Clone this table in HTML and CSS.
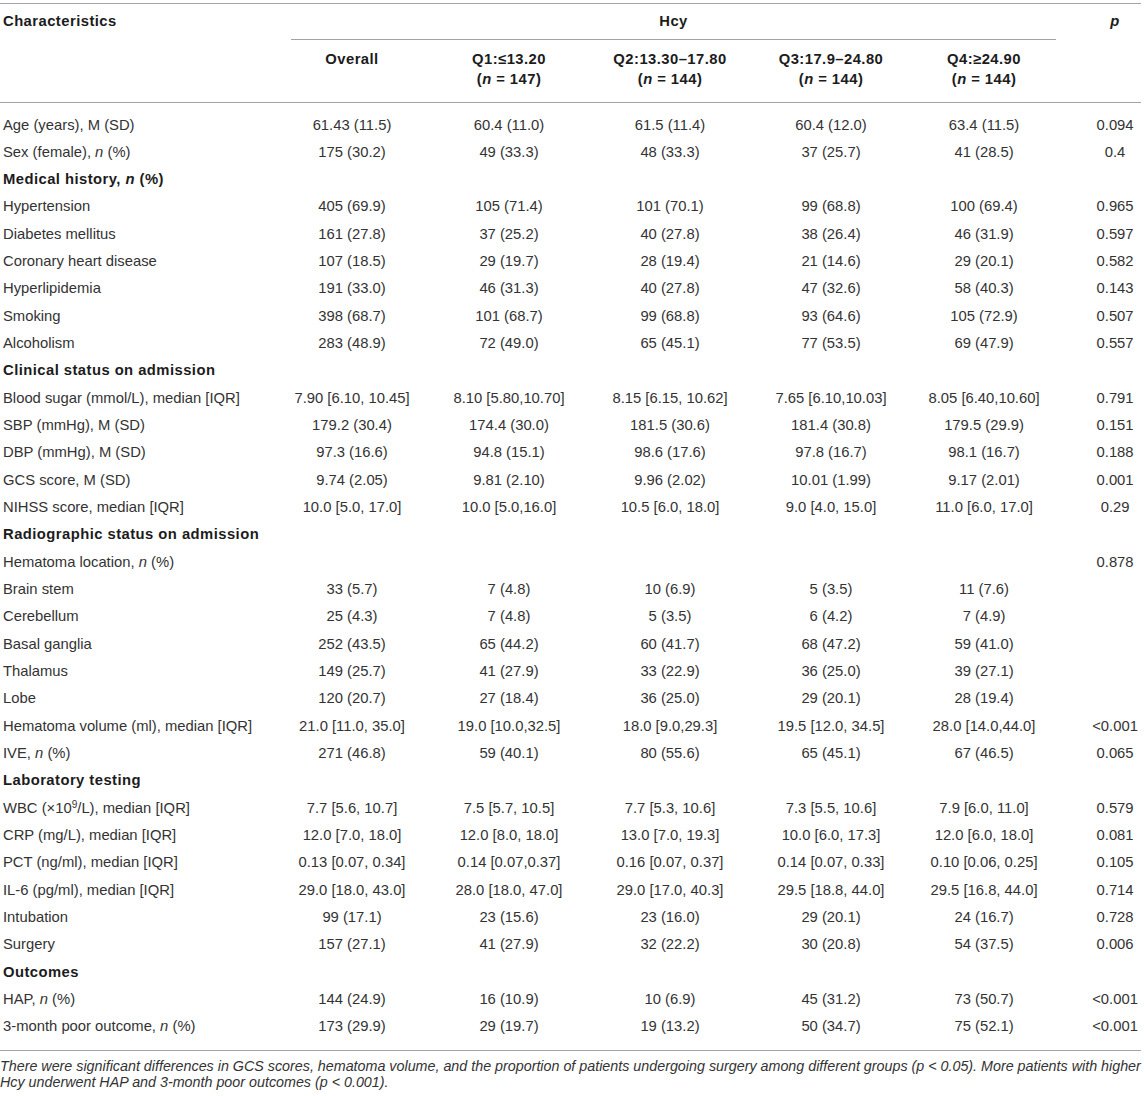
FILE: index.html
```html
<!DOCTYPE html>
<html lang="en">
<head>
<meta charset="utf-8">
<title>Table</title>
<link rel="stylesheet" href="styles.css">
</head>
<body>
<div class="page">
<table class="data">
  <colgroup>
    <col class="c-char">
    <col class="c-all">
    <col class="c-q1">
    <col class="c-q2">
    <col class="c-q3">
    <col class="c-q4">
    <col class="c-p">
  </colgroup>
  <thead>
    <tr class="h1">
      <th rowspan="2" class="th-char">Characteristics</th>
      <th colspan="5" class="th-hcy"><div class="hcy-line">Hcy</div></th>
      <th rowspan="2" class="th-p"><i>p</i></th>
    </tr>
    <tr class="h2">
      <th>Overall</th>
      <th>Q1:≤13.20<br>(<i>n</i> = 147)</th>
      <th>Q2:13.30–17.80<br>(<i>n</i> = 144)</th>
      <th>Q3:17.9–24.80<br>(<i>n</i> = 144)</th>
      <th>Q4:≥24.90<br>(<i>n</i> = 144)</th>
    </tr>
  </thead>
  <tbody>
    <tr><td>Age (years), M (SD)</td><td>61.43 (11.5)</td><td>60.4 (11.0)</td><td>61.5 (11.4)</td><td>60.4 (12.0)</td><td>63.4 (11.5)</td><td>0.094</td></tr>
    <tr><td>Sex (female), <i>n</i> (%)</td><td>175 (30.2)</td><td>49 (33.3)</td><td>48 (33.3)</td><td>37 (25.7)</td><td>41 (28.5)</td><td>0.4</td></tr>
    <tr class="sec"><td colspan="7">Medical history, <i>n</i> (%)</td></tr>
    <tr><td>Hypertension</td><td>405 (69.9)</td><td>105 (71.4)</td><td>101 (70.1)</td><td>99 (68.8)</td><td>100 (69.4)</td><td>0.965</td></tr>
    <tr><td>Diabetes mellitus</td><td>161 (27.8)</td><td>37 (25.2)</td><td>40 (27.8)</td><td>38 (26.4)</td><td>46 (31.9)</td><td>0.597</td></tr>
    <tr><td>Coronary heart disease</td><td>107 (18.5)</td><td>29 (19.7)</td><td>28 (19.4)</td><td>21 (14.6)</td><td>29 (20.1)</td><td>0.582</td></tr>
    <tr><td>Hyperlipidemia</td><td>191 (33.0)</td><td>46 (31.3)</td><td>40 (27.8)</td><td>47 (32.6)</td><td>58 (40.3)</td><td>0.143</td></tr>
    <tr><td>Smoking</td><td>398 (68.7)</td><td>101 (68.7)</td><td>99 (68.8)</td><td>93 (64.6)</td><td>105 (72.9)</td><td>0.507</td></tr>
    <tr><td>Alcoholism</td><td>283 (48.9)</td><td>72 (49.0)</td><td>65 (45.1)</td><td>77 (53.5)</td><td>69 (47.9)</td><td>0.557</td></tr>
    <tr class="sec"><td colspan="7">Clinical status on admission</td></tr>
    <tr><td>Blood sugar (mmol/L), median [IQR]</td><td>7.90 [6.10, 10.45]</td><td>8.10 [5.80,10.70]</td><td>8.15 [6.15, 10.62]</td><td>7.65 [6.10,10.03]</td><td>8.05 [6.40,10.60]</td><td>0.791</td></tr>
    <tr><td>SBP (mmHg), M (SD)</td><td>179.2 (30.4)</td><td>174.4 (30.0)</td><td>181.5 (30.6)</td><td>181.4 (30.8)</td><td>179.5 (29.9)</td><td>0.151</td></tr>
    <tr><td>DBP (mmHg), M (SD)</td><td>97.3 (16.6)</td><td>94.8 (15.1)</td><td>98.6 (17.6)</td><td>97.8 (16.7)</td><td>98.1 (16.7)</td><td>0.188</td></tr>
    <tr><td>GCS score, M (SD)</td><td>9.74 (2.05)</td><td>9.81 (2.10)</td><td>9.96 (2.02)</td><td>10.01 (1.99)</td><td>9.17 (2.01)</td><td>0.001</td></tr>
    <tr><td>NIHSS score, median [IQR]</td><td>10.0 [5.0, 17.0]</td><td>10.0 [5.0,16.0]</td><td>10.5 [6.0, 18.0]</td><td>9.0 [4.0, 15.0]</td><td>11.0 [6.0, 17.0]</td><td>0.29</td></tr>
    <tr class="sec"><td colspan="7">Radiographic status on admission</td></tr>
    <tr><td>Hematoma location, <i>n</i> (%)</td><td></td><td></td><td></td><td></td><td></td><td>0.878</td></tr>
    <tr><td>Brain stem</td><td>33 (5.7)</td><td>7 (4.8)</td><td>10 (6.9)</td><td>5 (3.5)</td><td>11 (7.6)</td><td></td></tr>
    <tr><td>Cerebellum</td><td>25 (4.3)</td><td>7 (4.8)</td><td>5 (3.5)</td><td>6 (4.2)</td><td>7 (4.9)</td><td></td></tr>
    <tr><td>Basal ganglia</td><td>252 (43.5)</td><td>65 (44.2)</td><td>60 (41.7)</td><td>68 (47.2)</td><td>59 (41.0)</td><td></td></tr>
    <tr><td>Thalamus</td><td>149 (25.7)</td><td>41 (27.9)</td><td>33 (22.9)</td><td>36 (25.0)</td><td>39 (27.1)</td><td></td></tr>
    <tr><td>Lobe</td><td>120 (20.7)</td><td>27 (18.4)</td><td>36 (25.0)</td><td>29 (20.1)</td><td>28 (19.4)</td><td></td></tr>
    <tr><td>Hematoma volume (ml), median [IQR]</td><td>21.0 [11.0, 35.0]</td><td>19.0 [10.0,32.5]</td><td>18.0 [9.0,29.3]</td><td>19.5 [12.0, 34.5]</td><td>28.0 [14.0,44.0]</td><td>&lt;0.001</td></tr>
    <tr><td>IVE, <i>n</i> (%)</td><td>271 (46.8)</td><td>59 (40.1)</td><td>80 (55.6)</td><td>65 (45.1)</td><td>67 (46.5)</td><td>0.065</td></tr>
    <tr class="sec"><td colspan="7">Laboratory testing</td></tr>
    <tr><td>WBC (×10<sup>9</sup>/L), median [IQR]</td><td>7.7 [5.6, 10.7]</td><td>7.5 [5.7, 10.5]</td><td>7.7 [5.3, 10.6]</td><td>7.3 [5.5, 10.6]</td><td>7.9 [6.0, 11.0]</td><td>0.579</td></tr>
    <tr><td>CRP (mg/L), median [IQR]</td><td>12.0 [7.0, 18.0]</td><td>12.0 [8.0, 18.0]</td><td>13.0 [7.0, 19.3]</td><td>10.0 [6.0, 17.3]</td><td>12.0 [6.0, 18.0]</td><td>0.081</td></tr>
    <tr><td>PCT (ng/ml), median [IQR]</td><td>0.13 [0.07, 0.34]</td><td>0.14 [0.07,0.37]</td><td>0.16 [0.07, 0.37]</td><td>0.14 [0.07, 0.33]</td><td>0.10 [0.06, 0.25]</td><td>0.105</td></tr>
    <tr><td>IL-6 (pg/ml), median [IQR]</td><td>29.0 [18.0, 43.0]</td><td>28.0 [18.0, 47.0]</td><td>29.0 [17.0, 40.3]</td><td>29.5 [18.8, 44.0]</td><td>29.5 [16.8, 44.0]</td><td>0.714</td></tr>
    <tr><td>Intubation</td><td>99 (17.1)</td><td>23 (15.6)</td><td>23 (16.0)</td><td>29 (20.1)</td><td>24 (16.7)</td><td>0.728</td></tr>
    <tr><td>Surgery</td><td>157 (27.1)</td><td>41 (27.9)</td><td>32 (22.2)</td><td>30 (20.8)</td><td>54 (37.5)</td><td>0.006</td></tr>
    <tr class="sec"><td colspan="7">Outcomes</td></tr>
    <tr><td>HAP, <i>n</i> (%)</td><td>144 (24.9)</td><td>16 (10.9)</td><td>10 (6.9)</td><td>45 (31.2)</td><td>73 (50.7)</td><td>&lt;0.001</td></tr>
    <tr><td>3-month poor outcome, <i>n</i> (%)</td><td>173 (29.9)</td><td>29 (19.7)</td><td>19 (13.2)</td><td>50 (34.7)</td><td>75 (52.1)</td><td>&lt;0.001</td></tr>
  </tbody>
</table>
<p class="note">There were significant differences in GCS scores, hematoma volume, and the proportion of patients undergoing surgery among different groups (p &lt; 0.05). More patients with higher Hcy underwent HAP and 3-month poor outcomes (p &lt; 0.001).</p>
</div>
</body>
</html>
```

FILE: styles.css
```css
html, body {
  margin: 0;
  padding: 0;
  background: #ffffff;
}

.page {
  padding-top: 3px;
  width: 1141px;
  font-family: "Liberation Sans", Arial, sans-serif;
  color: #333333;
}

.data {
  width: 1141px;
  table-layout: fixed;
  border-collapse: collapse;
  font-size: 14.8px;
}

.c-char { width: 291px; }
.c-all { width: 122px; }
.c-q1 { width: 192px; }
.c-q2 { width: 130px; }
.c-q3 { width: 192px; }
.c-q4 { width: 114px; }
.c-p { width: 100px; }

.data thead {
  border-top: 1px solid #a3a3a3;
  border-bottom: 1px solid #a3a3a3;
}

.data th {
  font-weight: bold;
  color: #1c1c1c;
  letter-spacing: 0.45px;
  line-height: 20.5px;
  padding: 0;
  vertical-align: top;
  text-align: center;
  white-space: nowrap;
}

.h1 th {
  padding-top: 7px;
}

.data th.th-char {
  text-align: left;
  padding-left: 3px;
}

.data th.th-p {
  padding-left: 48px;
}

.hcy-line {
  padding-bottom: 7px;
  border-bottom: 1px solid #a3a3a3;
  margin-right: -15px;
}

.h2 th {
  padding-top: 9px;
  padding-bottom: 12px;
}

.data td {
  padding: 4px 0;
  line-height: 19.33px;
  text-align: center;
  white-space: nowrap;
}

.data td:first-child {
  text-align: left;
  padding-left: 3px;
}

.data td:last-child {
  padding-left: 48px;
}

.data tbody tr:first-child td {
  padding-top: 13px;
}

.data tbody tr:last-child td {
  padding-bottom: 13px;
  border-bottom: 1px solid #a3a3a3;
}

.data tr.sec td {
  font-weight: bold;
  color: #1c1c1c;
  letter-spacing: 0.45px;
  text-align: left;
  padding-left: 3px;
}

.data sup {
  font-size: 0.68em;
  line-height: 0;
  vertical-align: 0.5em;
}

.note {
  margin: 7px 0 0 0;
  font-style: italic;
  font-size: 14.3px;
  line-height: 16px;
  color: #333333;
}
```
